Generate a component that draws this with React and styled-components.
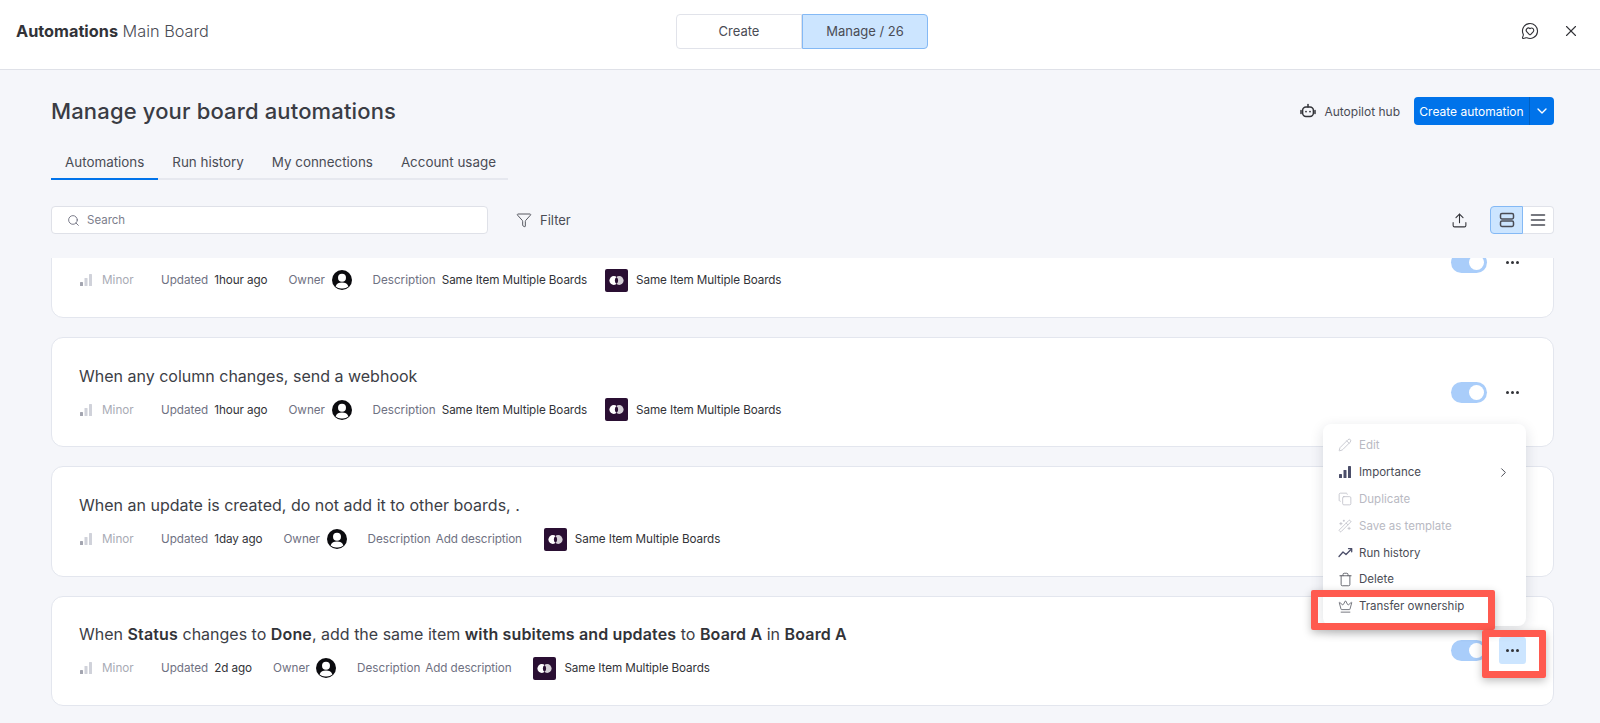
import React from 'react';
import styled, { createGlobalStyle } from 'styled-components';
import {
  ChevronDown,
  ChevronRight,
  Copy,
  Crown,
  Funnel,
  MessageCircleHeart,
  Pencil,
  Search,
  Trash,
  Upload,
  WandSparkles,
  X,
} from 'lucide-react';

const BODY_FONT = '"Inter", "Noto Sans", sans-serif';

const GlobalStyle = createGlobalStyle`
  html, body {
    margin: 0;
    height: 100%;
    overflow: hidden;
    background: #f5f6fa;
  }
  * {
    box-sizing: border-box;
  }
  body {
    font-family: ${BODY_FONT};
    color: #323338;
  }
`;

const ImportanceIcon = ({ $active }) => (
  <svg width="14" height="14" viewBox="0 0 14 14">
    <rect x="1" y="9" width="3" height="4" rx="0.6" fill={$active ? '#4b4e69' : '#a3a5b0'} />
    <rect x="5.5" y="5" width="3" height="8" rx="0.6" fill={$active ? '#4b4e69' : '#d0d2da'} />
    <rect x="10" y="1" width="3" height="12" rx="0.6" fill={$active ? '#4b4e69' : '#d0d2da'} />
  </svg>
);

const AvatarIcon = () => (
  <svg width="20" height="20" viewBox="0 0 20 20">
    <circle cx="10" cy="10" r="10" fill="#0b0b0f" />
    <circle cx="10" cy="7.8" r="4" fill="#fff" />
    <path d="M3.6 16.4C4.6 13.6 7 12.6 10 12.6s5.4 1 6.4 3.8A8.6 8.6 0 0 1 10 18.4a8.6 8.6 0 0 1-6.4-2z" fill="#fff" />
  </svg>
);

const BoardLogo = () => (
  <LogoTile>
    <svg width="15" height="11" viewBox="0 0 15 11">
      <circle cx="4.8" cy="5.5" r="4.4" fill="#fff" />
      <circle cx="10.2" cy="5.5" r="4.4" fill="#fff" opacity="0.8" />
      <path d="M7.5 2.05a4.4 4.4 0 0 1 0 6.9a4.4 4.4 0 0 1 0-6.9z" fill="#2a0f33" />
    </svg>
  </LogoTile>
);

const BotIcon = () => (
  <svg width="16" height="16" viewBox="0 0 16 16" fill="none" stroke="#323338" strokeWidth="1.5">
    <path d="M8 1.5V4" strokeLinecap="round" />
    <rect x="2.6" y="4" width="10.8" height="9.4" rx="3.4" />
    <circle cx="6" cy="8.6" r="0.9" fill="#323338" stroke="none" />
    <circle cx="10" cy="8.6" r="0.9" fill="#323338" stroke="none" />
    <path d="M1 7.4v3M15 7.4v3" strokeLinecap="round" />
  </svg>
);

const RunHistoryIcon = () => (
  <svg width="15" height="15" viewBox="0 0 15 15" fill="none" stroke="#4b4e69" strokeWidth="1.3" strokeLinecap="round" strokeLinejoin="round">
    <path d="M1 11.5 5 7l3 2.5L13.5 4" />
    <path d="M10.5 3.6h3.2v3.2" />
  </svg>
);

const CardsViewIcon = () => (
  <svg width="16" height="16" viewBox="0 0 16 16" fill="none" stroke="#4a4c55" strokeWidth="1.5">
    <rect x="1.5" y="1.5" width="13" height="5.4" rx="1.4" />
    <rect x="1.5" y="9.1" width="13" height="5.4" rx="1.4" />
  </svg>
);

const ListViewIcon = () => (
  <svg width="16" height="16" viewBox="0 0 16 16" fill="none" stroke="#4a4c55" strokeWidth="1.6" strokeLinecap="round">
    <path d="M1.5 3h13M1.5 8h13M1.5 13h13" />
  </svg>
);

const CARDS = [
  {
    id: 1,
    updated: '1hour ago',
    description: 'Same Item Multiple Boards',
  },
  {
    id: 2,
    title: 'When any column changes, send a webhook',
    updated: '1hour ago',
    description: 'Same Item Multiple Boards',
  },
  {
    id: 3,
    title: 'When an update is created, do not add it to other boards, .',
    updated: '1day ago',
    placeholder: 'Add description',
  },
  {
    id: 4,
    title: (
      <>
        When <b>Status</b> changes to <b>Done</b>, add the same item <b>with subitems and updates</b> to <b>Board A</b> in <b>Board A</b>
      </>
    ),
    updated: '2d ago',
    placeholder: 'Add description',
    menuOpen: true,
  },
];

const MENU_ITEMS = [
  { label: 'Edit', icon: <Pencil size={14} strokeWidth={1.3} />, disabled: true },
  { label: 'Importance', icon: <ImportanceIcon $active />, submenu: true },
  { label: 'Duplicate', icon: <Copy size={14} strokeWidth={1.3} />, disabled: true },
  { label: 'Save as template', icon: <WandSparkles size={14} strokeWidth={1.3} />, disabled: true },
  { label: 'Run history', icon: <RunHistoryIcon /> },
  { label: 'Delete', icon: <Trash size={15} strokeWidth={1.3} /> },
  { label: 'Transfer ownership', icon: <Crown size={15} strokeWidth={1.2} /> },
];

const TABS = ['Automations', 'Run history', 'My connections', 'Account usage'];

const AutomationCard = ({ card }) => (
  <Card>
    <CardBody>
      <CardTitle>{card.title || '\u00a0'}</CardTitle>
      <MetaRow>
        <Importance>
          <ImportanceIcon />
          <span>Minor</span>
        </Importance>
        <MetaPair>
          <MetaLabel>Updated</MetaLabel>
          <MetaValue>{card.updated}</MetaValue>
        </MetaPair>
        <OwnerPair>
          <MetaLabel>Owner</MetaLabel>
          <AvatarIcon />
        </OwnerPair>
        <DescriptionPair>
          <MetaLabel>Description</MetaLabel>
          {card.description ? <MetaValue>{card.description}</MetaValue> : <Placeholder>{card.placeholder}</Placeholder>}
        </DescriptionPair>
        <BoardRef>
          <BoardLogo />
          <MetaValue>Same Item Multiple Boards</MetaValue>
        </BoardRef>
      </MetaRow>
    </CardBody>
    <CardActions>
      <Toggle />
      <DotsButton $active={card.menuOpen} aria-label="More">
        <i />
        <i />
        <i />
      </DotsButton>
    </CardActions>
  </Card>
);

const App = () => (
  <Page>
    <GlobalStyle />
    <TopBar>
      <BoardName>
        <b>Automations</b> Main Board
      </BoardName>
      <Segment>
        <SegmentItem>Create</SegmentItem>
        <SegmentItem $active>Manage / 26</SegmentItem>
      </Segment>
      <TopIcons>
        <MessageCircleHeart size={18} strokeWidth={1.5} />
        <X size={18} strokeWidth={1.5} />
      </TopIcons>
    </TopBar>

    <Content>
      <HeadingRow>
        <Heading>Manage your board automations</Heading>
        <HeadingActions>
          <HubLink>
            <BotIcon />
            Autopilot hub
          </HubLink>
          <CreateButton>
            <CreateLabel>Create automation</CreateLabel>
            <CreateCaret>
              <ChevronDown size={16} strokeWidth={2} />
            </CreateCaret>
          </CreateButton>
        </HeadingActions>
      </HeadingRow>

      <Tabs>
        {TABS.map((tab, index) => (
          <Tab key={tab} $active={index === 0}>{tab}</Tab>
        ))}
      </Tabs>

      <FilterRow>
        <SearchBox>
          <Search size={13} strokeWidth={1.6} color="#676879" />
          <span>Search</span>
        </SearchBox>
        <FilterButton>
          <Funnel size={16} strokeWidth={1.4} />
          Filter
        </FilterButton>
        <ExportIcon>
          <Upload size={17} strokeWidth={1.5} />
        </ExportIcon>
        <ViewSwitch>
          <ViewButton $active>
            <CardsViewIcon />
          </ViewButton>
          <ViewButton>
            <ListViewIcon />
          </ViewButton>
        </ViewSwitch>
      </FilterRow>
    </Content>

    <ListViewport>
      <CardList>
        {CARDS.map((card) => (
          <AutomationCard key={card.id} card={card} />
        ))}
      </CardList>
    </ListViewport>

    <ContextMenu>
      {MENU_ITEMS.map((item) => (
        <MenuItem key={item.label} $disabled={item.disabled}>
          <MenuIcon>{item.icon}</MenuIcon>
          <span>{item.label}</span>
          {item.submenu && (
            <MenuCaret>
              <ChevronRight size={15} strokeWidth={1.6} />
            </MenuCaret>
          )}
        </MenuItem>
      ))}
    </ContextMenu>

    <TransferHighlight />
    <DotsHighlight />
  </Page>
);

const Page = styled.div`
  position: relative;
  width: 1600px;
  height: 723px;
  overflow: hidden;
  background: #f5f6fa;
`;

const TopBar = styled.header`
  display: grid;
  grid-template-columns: 660px 252px 1fr;
  align-items: center;
  height: 70px;
  padding-left: 16px;
  background: #fff;
  border-bottom: 1px solid #dfe1e8;
`;

const BoardName = styled.div`
  font-size: 16.3px;
  color: #4a4c55;
  font-weight: 300;
  margin-top: -7px;
  b {
    font-weight: 700;
    color: #323338;
  }
`;

const Segment = styled.div`
  display: grid;
  grid-template-columns: 126px 1fr;
  height: 35px;
  width: 252px;
  margin-top: -7px;
`;

const SegmentItem = styled.div`
  display: flex;
  align-items: center;
  justify-content: center;
  font-size: 13px;
  color: #4a4c55;
  background: ${({ $active }) => ($active ? '#cce5ff' : '#fff')};
  border: 1px solid ${({ $active }) => ($active ? '#84b9f5' : '#e1e3ea')};
  border-radius: ${({ $active }) => ($active ? '0 4px 4px 0' : '4px 0 0 4px')};
`;

const TopIcons = styled.div`
  display: flex;
  justify-content: flex-end;
  align-items: center;
  gap: 23px;
  padding-right: 20px;
  margin-top: -7px;
  color: #323338;
`;

const Content = styled.div`
  padding: 27px 46px 0 51px;
`;

const HeadingRow = styled.div`
  display: flex;
  justify-content: space-between;
  align-items: center;
  height: 28px;
`;

const Heading = styled.h1`
  margin: 0;
  font-size: 22px;
  font-weight: 500;
  letter-spacing: 0.15px;
  color: #3a3c44;
`;

const HeadingActions = styled.div`
  display: flex;
  align-items: center;
  gap: 14px;
`;

const HubLink = styled.div`
  display: flex;
  align-items: center;
  gap: 8px;
  font-size: 12px;
  color: #4a4c55;
`;

const CreateButton = styled.div`
  display: flex;
  width: 140px;
  height: 28px;
  border-radius: 4px;
  background: #0073ea;
  color: #fff;
  font-size: 12px;
`;

const CreateLabel = styled.div`
  display: flex;
  align-items: center;
  justify-content: center;
  flex: 1;
`;

const CreateCaret = styled.div`
  display: flex;
  align-items: center;
  justify-content: center;
  width: 25px;
  border-left: 1px solid #0060c2;
`;

const Tabs = styled.nav`
  display: flex;
  width: 457px;
  margin-top: 23px;
  height: 32px;
  border-bottom: 2px solid #e6e8ef;
`;

const Tab = styled.div`
  flex: none;
  padding: 0 14px;
  height: 32px;
  line-height: 28px;
  font-size: 13.4px;
  white-space: nowrap;
  color: #4a4c55;
  border-bottom: 2px solid ${({ $active }) => ($active ? '#0073ea' : 'transparent')};
`;

const FilterRow = styled.div`
  display: flex;
  align-items: center;
  margin-top: 26px;
  height: 28px;
`;

const SearchBox = styled.div`
  display: flex;
  align-items: center;
  gap: 7px;
  width: 437px;
  height: 28px;
  padding-left: 15px;
  background: #fff;
  border: 1px solid #dfe1e8;
  border-radius: 4px;
  font-size: 11.5px;
  color: #7c7e8c;
`;

const FilterButton = styled.div`
  display: flex;
  align-items: center;
  gap: 8px;
  margin-left: 28px;
  font-size: 13px;
  color: #4a4c55;
`;

const ExportIcon = styled.div`
  display: flex;
  margin-left: auto;
  margin-right: 22px;
  color: #323338;
`;

const ViewSwitch = styled.div`
  display: flex;
  height: 28px;
`;

const ViewButton = styled.div`
  display: flex;
  align-items: center;
  justify-content: center;
  width: ${({ $active }) => ($active ? '33px' : '31px')};
  background: ${({ $active }) => ($active ? '#cce5ff' : '#fff')};
  border: 1px solid ${({ $active }) => ($active ? '#84b9f5' : '#e1e3ea')};
  border-left-width: ${({ $active }) => ($active ? '1px' : '0')};
  border-radius: ${({ $active }) => ($active ? '4px 0 0 4px' : '0 4px 4px 0')};
`;

const ListViewport = styled.div`
  height: 465px;
  margin-top: 24px;
  padding: 0 46px 0 51px;
  overflow: hidden;
`;

const CardList = styled.div`
  display: flex;
  flex-direction: column;
  gap: 19px;
  margin-top: -50.4px;
`;

const Card = styled.article`
  display: flex;
  align-items: center;
  justify-content: space-between;
  height: 110.4px;
  padding: 0 28px 0 27px;
  background: #fff;
  border: 1px solid #e3e6ee;
  border-radius: 12px;
`;

const CardBody = styled.div`
  display: flex;
  flex-direction: column;
  gap: 11.5px;
  padding-top: 1.5px;
`;

const CardTitle = styled.div`
  font-size: 16px;
  line-height: 22px;
  color: #3c3e46;
  font-weight: 400;
  b {
    font-weight: 600;
    letter-spacing: 0.15px;
    color: #323338;
  }
`;

const MetaRow = styled.div`
  display: flex;
  align-items: center;
  height: 23px;
  font-size: 11.7px;
`;

const Importance = styled.div`
  display: flex;
  align-items: center;
  gap: 9px;
  width: 82px;
  color: #a9abb5;
`;

const MetaPair = styled.div`
  display: flex;
  align-items: center;
  gap: 6px;
  margin-right: 21px;
`;

const OwnerPair = styled(MetaPair)`
  gap: 6.5px;
`;

const DescriptionPair = styled(MetaPair)`
  margin-right: 18px;
`;

const MetaLabel = styled.span`
  color: #6f7182;
`;

const Placeholder = styled(MetaLabel)`
  margin-left: -1px;
  margin-right: 4px;
  letter-spacing: -0.1px;
`;

const MetaValue = styled.span`
  color: #323338;
  letter-spacing: -0.1px;
`;

const BoardRef = styled.div`
  display: flex;
  align-items: center;
  gap: 8px;
`;

const LogoTile = styled.div`
  display: flex;
  align-items: center;
  justify-content: center;
  width: 23px;
  height: 23px;
  border-radius: 2px;
  background: #2a0f33;
`;

const CardActions = styled.div`
  display: flex;
  align-items: center;
  gap: 12px;
  margin-right: -1px;
`;

const Toggle = styled.div`
  position: relative;
  width: 36px;
  height: 21px;
  border-radius: 11px;
  background: #a9cdfa;
  &::after {
    content: '';
    position: absolute;
    top: 3px;
    right: 3px;
    width: 15px;
    height: 15px;
    border-radius: 50%;
    background: #fff;
  }
`;

const DotsButton = styled.div`
  display: flex;
  align-items: center;
  justify-content: center;
  gap: 2px;
  width: 27px;
  height: 27px;
  border-radius: 3px;
  background: ${({ $active }) => ($active ? '#cce5ff' : 'transparent')};
  i {
    width: 3px;
    height: 3px;
    border-radius: 50%;
    background: #323338;
  }
`;

const ContextMenu = styled.div`
  position: absolute;
  top: 424px;
  left: 1323px;
  width: 203px;
  height: 202px;
  padding: 8px 0 0;
  background: #fff;
  border-radius: 8px;
  box-shadow: 0 4px 14px rgba(29, 32, 60, 0.14);
`;

const MenuItem = styled.div`
  display: flex;
  align-items: center;
  height: 26.8px;
  padding-left: 14px;
  font-size: 11.5px;
  color: ${({ $disabled }) => ($disabled ? '#b9bac3' : '#4a4c55')};
`;

const MenuIcon = styled.span`
  display: flex;
  justify-content: center;
  width: 16px;
  margin-right: 6px;
`;

const MenuCaret = styled.span`
  display: flex;
  margin-left: auto;
  margin-right: 15px;
`;

const TransferHighlight = styled.div`
  position: absolute;
  top: 590px;
  left: 1311px;
  width: 184px;
  height: 40px;
  border: 7px solid #ff5a4f;
  border-radius: 2px;
  box-shadow: 0 3px 8px rgba(0, 0, 0, 0.25);
`;

const DotsHighlight = styled.div`
  position: absolute;
  top: 630px;
  left: 1482px;
  width: 64px;
  height: 48px;
  border: 7px solid #ff5a4f;
  border-radius: 2px;
  box-shadow: 0 3px 8px rgba(0, 0, 0, 0.25);
`;

export default App;
